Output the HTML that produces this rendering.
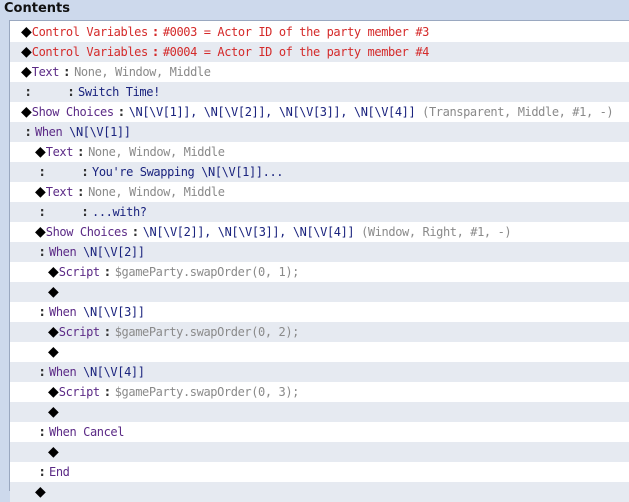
<!DOCTYPE html><html><head><style>
body{margin:0;width:629px;height:491px;overflow:hidden;background:#cdd9ec;font-family:"DejaVu Sans Mono","Liberation Mono",monospace;}
.h{position:absolute;left:4px;top:0;font:bold 13px "DejaVu Sans","Liberation Sans",sans-serif;color:#111;line-height:17px}
.box{position:absolute;left:9px;top:20px;right:0;bottom:0;background:#fff;border-left:1px solid #9aa8c0;border-top:1px solid #9aa8c0;padding-top:1px}
.r{height:20px;line-height:20px;font-size:12px;letter-spacing:-0.4px;white-space:pre;color:#333}
.r:nth-child(even){background:#e6eaf1}
.d{color:#000;font-family:"DejaVu Sans",sans-serif;font-size:14px;letter-spacing:0}
.red{color:#d42a2a}.c{color:#5b2a86}.g{color:#8a8a8a}.n{color:#1a237e}
.k{display:inline-block;width:15px;text-align:center;color:#333;font-weight:bold;font-family:"DejaVu Sans",sans-serif}
.k2{display:inline-block;width:43px;text-align:right;color:#333;font-weight:bold;font-family:"DejaVu Sans",sans-serif;padding-right:5px;box-sizing:border-box}
.k0{display:inline-block;width:14px;text-align:center;color:#333;font-weight:bold;font-family:"DejaVu Sans",sans-serif}
</style></head><body>
<div class="h">Contents</div>
<div class="box">
<div class="r" style="padding-left:11px"><span class="d">◆</span><span class="red">Control Variables<span class="k" style="color:#d42a2a">:</span>#0003 = Actor ID of the party member #3</span></div>
<div class="r" style="padding-left:11px"><span class="d">◆</span><span class="red">Control Variables<span class="k" style="color:#d42a2a">:</span>#0004 = Actor ID of the party member #4</span></div>
<div class="r" style="padding-left:11px"><span class="d">◆</span><span class="c">Text</span><span class="k">:</span><span class="g">None, Window, Middle</span></div>
<div class="r" style="padding-left:11px"><span class="k0">:</span><span class="k2">:</span><span class="n">Switch Time!</span></div>
<div class="r" style="padding-left:11px"><span class="d">◆</span><span class="c">Show Choices</span><span class="k">:</span><span class="n">\N[\V[1]], \N[\V[2]], \N[\V[3]], \N[\V[4]] </span><span class="g">(Transparent, Middle, #1, -)</span></div>
<div class="r" style="padding-left:11px"><span class="k0">:</span><span class="c">When </span><span class="n">\N[\V[1]]</span></div>
<div class="r" style="padding-left:25px"><span class="d">◆</span><span class="c">Text</span><span class="k">:</span><span class="g">None, Window, Middle</span></div>
<div class="r" style="padding-left:25px"><span class="k0">:</span><span class="k2">:</span><span class="n">You're Swapping \N[\V[1]]...</span></div>
<div class="r" style="padding-left:25px"><span class="d">◆</span><span class="c">Text</span><span class="k">:</span><span class="g">None, Window, Middle</span></div>
<div class="r" style="padding-left:25px"><span class="k0">:</span><span class="k2">:</span><span class="n">...with?</span></div>
<div class="r" style="padding-left:25px"><span class="d">◆</span><span class="c">Show Choices</span><span class="k">:</span><span class="n">\N[\V[2]], \N[\V[3]], \N[\V[4]] </span><span class="g">(Window, Right, #1, -)</span></div>
<div class="r" style="padding-left:25px"><span class="k0">:</span><span class="c">When </span><span class="n">\N[\V[2]]</span></div>
<div class="r" style="padding-left:38px"><span class="d">◆</span><span class="c">Script</span><span class="k">:</span><span class="g">$gameParty.swapOrder(0, 1);</span></div>
<div class="r" style="padding-left:38px"><span class="d">◆</span></div>
<div class="r" style="padding-left:25px"><span class="k0">:</span><span class="c">When </span><span class="n">\N[\V[3]]</span></div>
<div class="r" style="padding-left:38px"><span class="d">◆</span><span class="c">Script</span><span class="k">:</span><span class="g">$gameParty.swapOrder(0, 2);</span></div>
<div class="r" style="padding-left:38px"><span class="d">◆</span></div>
<div class="r" style="padding-left:25px"><span class="k0">:</span><span class="c">When </span><span class="n">\N[\V[4]]</span></div>
<div class="r" style="padding-left:38px"><span class="d">◆</span><span class="c">Script</span><span class="k">:</span><span class="g">$gameParty.swapOrder(0, 3);</span></div>
<div class="r" style="padding-left:38px"><span class="d">◆</span></div>
<div class="r" style="padding-left:25px"><span class="k0">:</span><span class="c">When Cancel</span></div>
<div class="r" style="padding-left:38px"><span class="d">◆</span></div>
<div class="r" style="padding-left:25px"><span class="k0">:</span><span class="c">End</span></div>
<div class="r" style="padding-left:25px"><span class="d">◆</span></div>
</div>
</body></html>
